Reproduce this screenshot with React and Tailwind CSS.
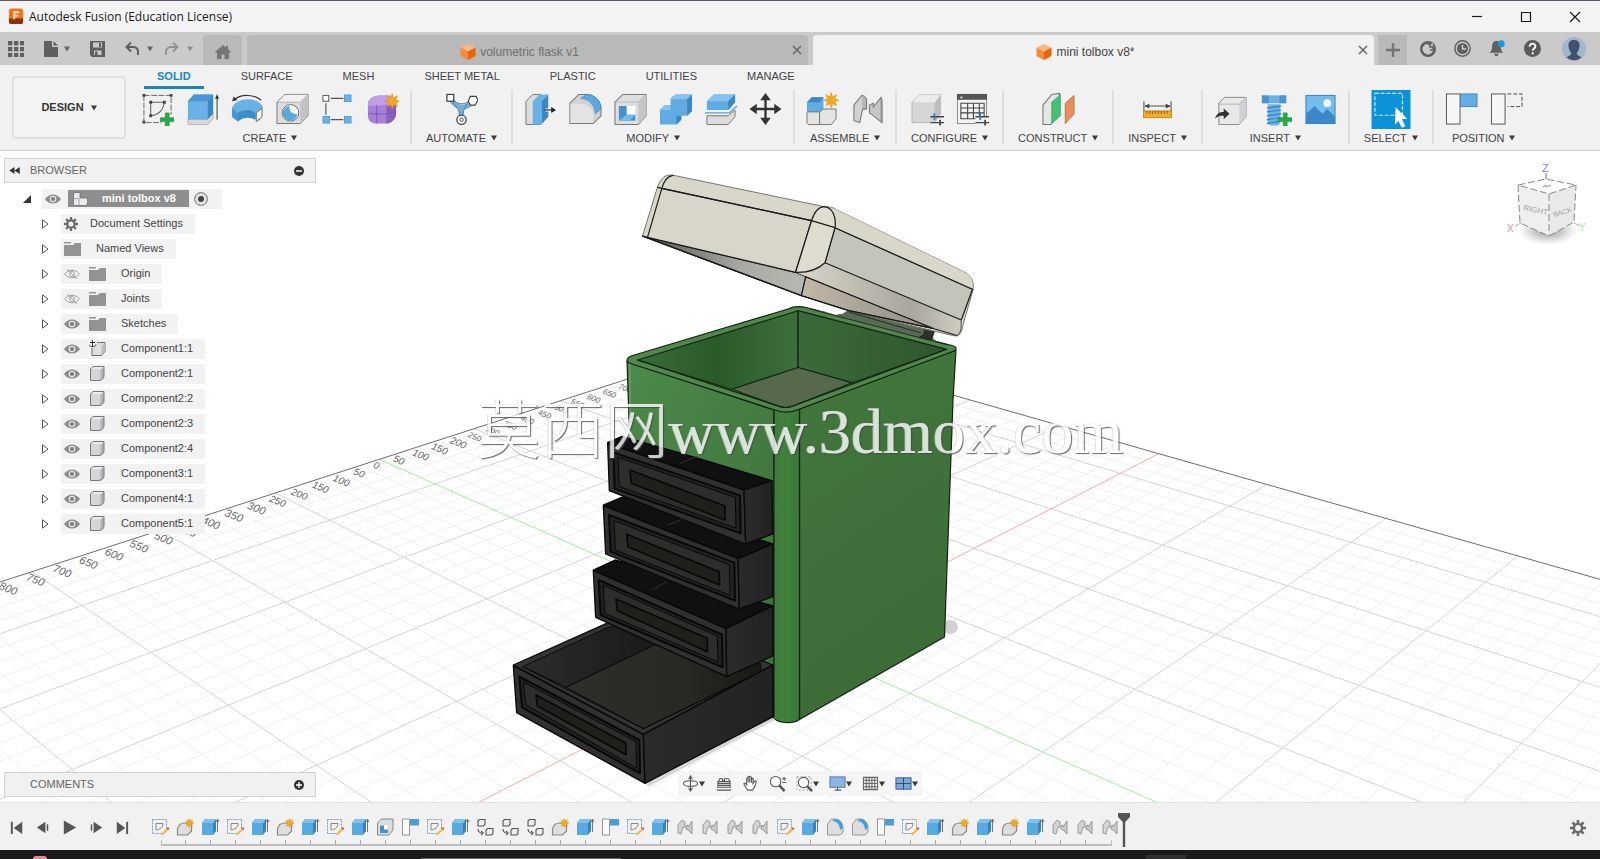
import React from "react";

/* ---------- small shared glyphs ---------- */

const Caret = ({ className = "text-[#3a3a3a]" }) => (
  <svg viewBox="0 0 6 6" className={"h-[6px] w-[6px] shrink-0 " + className} fill="currentColor">
    <path d="M0 0.5h6L3 5.5z" />
  </svg>
);

const Svg = ({ children, box = 34, className = "h-[34px] w-[33px]" }) => (
  <svg viewBox={`0 0 ${box} ${box}`} className={className} fill="none">
    {children}
  </svg>
);

const Star = ({ x, y, r = 7 }) => {
  const pts = [];
  for (let k = 0; k < 16; k++) {
    const a = (k * Math.PI) / 8 - Math.PI / 2;
    const rr = k % 2 ? r * 0.5 : r;
    pts.push(`${(x + rr * Math.cos(a)).toFixed(2)},${(y + rr * Math.sin(a)).toFixed(2)}`);
  }
  return <polygon points={pts.join(" ")} fill="#f0a821" stroke="#d98e12" strokeWidth="0.5" />;
};

const Plus = ({ x, y }) => (
  <path
    d={`M${x - 2} ${y - 7}h4v5h5v4h-5v5h-4v-5h-5v-4h5z`}
    fill="#2aa84a"
    stroke="#1d8a3a"
    strokeWidth="0.6"
  />
);

/* ---------- ribbon icons ---------- */

const ICONS = {
  sketch: (
    <>
      <path d="M3 3h28v20M3 3v28h18" stroke="#666" strokeWidth="1" strokeDasharray="6 1.5" />
      <path d="M10 10h14M10 10v14M24 10c-1 8-5 13-14 14" stroke="#666" strokeWidth="1.1" />
      <g fill="#444">
        <path d="M1.500 1.500h3v3h-3zM29.500 1.500h3v3h-3zM1.500 29h3v3h-3zM8.500 8.500h3v3h-3zM22.500 8.500h3v3h-3zM8.500 22.500h3v3h-3z" />
      </g>
      <Plus x={27} y={28} />
    </>
  ),
  extrude: (
    <>
      <path d="M2 27h20l6-6v6l-6 6H2z" fill="#d8d8d8" stroke="#999" strokeWidth="0.6" />
      <path d="M2 9l6-7h20l-6 7v19H2z" fill="#69b1e6" />
      <path d="M2 9l6-7h20l-6 7z" fill="#4a97d3" />
      <path d="M22 9l6-7v20l-6 6z" fill="#3b87c4" />
      <path d="M32 28V4" stroke="#333" strokeWidth="1" />
      <path d="M32 1.500l2 5h-4z" fill="#333" />
    </>
  ),
  revolve: (
    <>
      <path d="M1 16c2-6 9-9 16-9s13 2 16 8l-3 3v11l-6-2c-4-3-10-3-14 0l-3 3-6-5z" fill="#69b1e6" />
      <path d="M1 16l6 5v9l-6-5z" fill="#4a97d3" />
      <path d="M7 21c5-4 14-4 18 0v7c-5-3-13-3-18 2z" fill="#3f8ccb" />
      <path d="M26 21l6-5v9l-6 5z" fill="#fff" stroke="#666" strokeWidth="1" />
      <path d="M4 7C11 1 24 2 31 8" stroke="#333" strokeWidth="1.100" />
      <path d="M1 9l2-5 3.500 4z" fill="#333" />
    </>
  ),
  hole: (
    <>
      <path d="M1 10l8-8h24v22l-8 8H1z" fill="#dcdcdc" stroke="#777" strokeWidth="1" />
      <path d="M1 10h24l8-8H9z" fill="#f1f1f1" stroke="#888" strokeWidth="0.600" />
      <path d="M25 10l8-8v22l-8 8z" fill="#c2c2c2" />
      <circle cx="15" cy="21" r="8.500" fill="#fff" stroke="#666" />
      <path d="M14 14a7.500 7.500 0 1 0 8 8c-5 1-9-3-8-8z" fill="#5ba7df" />
    </>
  ),
  pattern: (
    <>
      <path d="M10 6h13M5 11v12M10 28h13" stroke="#555" strokeWidth="1.200" />
      <rect x="2" y="3" width="6" height="6" fill="#fff" stroke="#555" />
      <rect x="24" y="2.500" width="7" height="7" fill="#69b1e6" stroke="#3f87c0" strokeWidth="0.600" />
      <rect x="2" y="24.500" width="7" height="7" fill="#69b1e6" stroke="#3f87c0" strokeWidth="0.600" />
      <rect x="24" y="24.500" width="7" height="7" fill="#69b1e6" stroke="#3f87c0" strokeWidth="0.600" />
    </>
  ),
  form: (
    <>
      <path d="M2 12c0-5 5-9 12-9h8c6 0 9 3 9 8v10c0 6-5 11-11 11h-9c-6 0-9-3-9-8z" fill="#a77fd6" />
      <path d="M2 14c0-6 5-11 12-11h8c5 0 8 2 9 6-3 3-6 4-10 4z" fill="#bf9fe6" />
      <path d="M21 13c5 0 9-3 10-5v13c0 6-5 11-10 11z" fill="#8a5dc2" />
      <path d="M11 13v19M2 22h19c4 0 8-2 10-4" stroke="#7a4cb5" strokeWidth="0.800" />
      <Star x={27} y={9} r={8} />
    </>
  ),
  automate: (
    <>
      <path d="M5 5c3 6 7 9 11 10s10-2 13-6M16 14l1 13" stroke="#79aed6" strokeWidth="5" />
      <path d="M7 8c4 7 8 9 9 18M26 9c-5 3-7 8-8 17M8 7c5 6 12 6 18 1" stroke="#4d7da3" strokeWidth="1" />
      <rect x="2" y="2" width="7" height="7" fill="#fff" stroke="#444" strokeWidth="1.300" />
      <path d="M26 4h6l2 4-3 5h-5l-2-4z" fill="#fff" stroke="#444" strokeWidth="1.200" />
      <circle cx="17" cy="28" r="4.800" fill="#fff" stroke="#444" strokeWidth="1.300" />
      <circle cx="17" cy="28" r="1.800" stroke="#444" />
    </>
  ),
  presspull: (
    <>
      <path d="M2 9l7-7h8v31H2z" fill="#dcdcdc" stroke="#777" />
      <path d="M9 9l7-7h9l-7 7v24H9z" fill="#69b1e6" />
      <path d="M18 9l7-7v23l-7 8z" fill="#3b87c4" />
      <path d="M22 18h6" stroke="#fff" strokeWidth="3" />
      <path d="M21 18h8" stroke="#222" strokeWidth="1.200" />
      <path d="M33 18l-5-3v6z" fill="#222" />
    </>
  ),
  fillet: (
    <>
      <path d="M1 11l9-9h8c9 0 15 8 15 15v7l-8 8H1z" fill="#d2d2d2" stroke="#777" strokeWidth="1.100" />
      <path d="M1.500 11.500h10c8 0 13.500 5 13.500 13v7H1.500z" fill="#e4e4e4" />
      <path d="M12 6l6-4c9 0 15 7 15 15l-6 5c0-9-6-15-15-16z" fill="#5ba7df" stroke="#3a82bb" strokeWidth="0.600" />
    </>
  ),
  shell: (
    <>
      <path d="M1 10l8-8h24v22l-8 9H1z" fill="#dedede" stroke="#777" strokeWidth="1.100" />
      <path d="M25 10l8-8v22l-8 9z" fill="#c6c6c6" />
      <path d="M1 10h24l8-8" stroke="#aaa" strokeWidth="0.700" />
      <rect x="5" y="14" width="17" height="15" fill="#fff" />
      <path d="M5 14h8v9h9v6H5z" fill="#4391d0" />
      <path d="M13 23h9l-6 6H5z" fill="#78bbeb" />
    </>
  ),
  combine: (
    <>
      <path d="M12 6l5-4h17v17l-5 5h-6v4l-5 5H1V18l5-5h6z" fill="#5fabe2" />
      <path d="M12 6l5-4h17l-5 5H12zM1 18l5-5h6v5z" fill="#87c3ef" />
      <path d="M29 7l5-5v17l-5 5zM18 24h5v4l-5 5z" fill="#3b87c4" />
    </>
  ),
  split: (
    <>
      <path d="M3 9l7-7h22v8l-7 8H3z" fill="#5fabe2" />
      <path d="M3 9l7-7h22l-7 7z" fill="#86c2ee" />
      <path d="M25 9l7-7v8l-7 8z" fill="#3b87c4" />
      <path d="M1 21h25l8-7" stroke="#5b9fd4" strokeWidth="1.300" />
      <path d="M3 24h22l7-6v7l-7 8H3z" fill="#dcdcdc" stroke="#777" />
    </>
  ),
  move: (
    <>
      <path d="M17 5v24M5 17h24" stroke="#333" strokeWidth="2.400" />
      <path d="M17 0.500l5.500 7.500h-11zM17 33.500l5.500-7.500h-11zM0.500 17l7.500-5.500v11zM33.500 17L26 11.500v11z" fill="#333" />
    </>
  ),
  newcomp: (
    <>
      <path d="M1 10l5-5h12v15H1z" fill="#5fabe2" />
      <path d="M1 10l5-5h12l-4 5z" fill="#3b87c4" />
      <path d="M1 20h13v13H3c-1 0-2-1-2-2z" fill="#e4e4e4" stroke="#777" />
      <path d="M14 20l4-3h13v10l-5 6H14z" fill="#e4e4e4" stroke="#777" />
      <Star x={26} y={8} r={8} />
    </>
  ),
  joint: (
    <>
      <path d="M3 13l8-10 5 4v10h-4l-3 14-6-2z" fill="#d2d2d2" stroke="#777" strokeWidth="1.100" />
      <path d="M11 3c2 0 4 1 5 4v10h-4" fill="#b5b5b5" stroke="#777" />
      <path d="M19 13l4-2v4l8-10 1 3v23l-10-8-3-2z" fill="#c6c6c6" stroke="#777" strokeWidth="1.100" />
      <path d="M31 6v25" stroke="#8b8b8b" />
    </>
  ),
  configure: (
    <>
      <path d="M1 10l8-8h22l-6 8v21H1z" fill="#d6d6d6" stroke="#aaa" strokeWidth="0.800" />
      <path d="M1 10l8-8h22l-6 8z" fill="#ececec" />
      <path d="M25 10l6-8v20l-6 9z" fill="#bdbdbd" />
      <path d="M20 25h14M20 31h14" stroke="#444" strokeWidth="1.400" />
      <path d="M24 21.500v7" stroke="#3a77b5" strokeWidth="1.800" />
      <path d="M30 28v6" stroke="#444" strokeWidth="1.800" />
    </>
  ),
  table: (
    <>
      <rect x="1.500" y="2" width="30" height="30" fill="#f3f3f3" stroke="#888" />
      <rect x="1" y="1.500" width="31" height="6" fill="#555" />
      <path d="M4 4.500h3l-1.500 2z" fill="#fff" />
      <path d="M5 11h24v16H5zM5 16h24M5 21h24M12 11v16M18 11v16M24 11v16" stroke="#444" strokeWidth="1.100" />
      <path d="M20 25h14v9H20z" fill="#f1f1f1" />
      <path d="M20 25h14M20 31h14" stroke="#444" strokeWidth="1.400" />
      <path d="M25 21.500v7" stroke="#3a77b5" strokeWidth="1.800" />
      <path d="M30 28v6" stroke="#444" strokeWidth="1.800" />
    </>
  ),
  plane: (
    <>
      <path d="M1 13L10 2l8-1v22l-9 10H1z" fill="#e6e6e6" stroke="#777" strokeWidth="1.100" />
      <path d="M10 10l9-8v22l-9 8z" fill="#43bf77" stroke="#2f9b5c" strokeWidth="0.600" />
      <path d="M24 11l9-8v19l-9 10z" fill="#e98f5d" stroke="#b96c40" strokeWidth="0.900" />
    </>
  ),
  measure: (
    <>
      <path d="M3 9v10M31 9v10M4 14h26" stroke="#555" strokeWidth="1.100" />
      <path d="M3.500 14l5-2.500v5zM30.500 14l-5-2.500v5z" fill="#444" />
      <rect x="2.500" y="19" width="29" height="7" fill="#f0ac2b" stroke="#bb7d11" strokeWidth="0.800" />
      <path d="M6 19v3M9 19v3M12 19v3M15 19v3M18 19v3M21 19v3M24 19v3M27 19v3" stroke="#7c5410" strokeWidth="0.900" />
    </>
  ),
  insert: (
    <>
      <path d="M5 11l6-6h22v20l-7 8H5z" fill="#e8e8ea" stroke="#888" />
      <path d="M26 12l7-7v20l-7 8z" fill="#d0d0d3" />
      <path d="M5 12h21l7-7" stroke="#999" strokeWidth="0.700" />
      <path d="M1 27c2-6 5-7 9-7v-3.500l6 5.500-6 5.500V24c-3 0-6 0-9 3z" fill="#333" />
    </>
  ),
  bolt: (
    <>
      <path d="M3 3h25v8H3z" fill="#69b1e6" />
      <path d="M3 3h7v8H3zM21 3h7v8h-7z" fill="#4a94cf" />
      <path d="M9 12h13v20l-3 2h-7l-3-2z" fill="#69b1e6" />
      <path d="M8 16l15-2M8 20l15-2M8 24l15-2M8 28l15-2M8 32l12-2" stroke="#3b80b8" strokeWidth="1.200" />
      <Plus x={27} y={28} />
    </>
  ),
  image: (
    <>
      <rect x="2" y="3" width="30" height="29" fill="#74bbf0" stroke="#3e7fb3" />
      <path d="M2 22l9-8 8 8 5-5 8 8v7H2z" fill="#3a88c8" />
      <circle cx="24" cy="11" r="4" fill="#eef7fd" />
    </>
  ),
  select: (
    <>
      <path d="M0 0h34v34H0z" fill="#0b92d8" />
      <path d="M3 3h24v19H3z" stroke="#c8ecfb" strokeWidth="1" strokeDasharray="3.500 1.500" />
      <path d="M21 15l10 10-4.500.500 3 6-3 1.500-3-6-3 3z" fill="#fff" />
    </>
  ),
  capture: (
    <>
      <rect x="1.500" y="1.500" width="14" height="31" fill="#f6f6f6" stroke="#555" />
      <rect x="16" y="1.500" width="17" height="13" fill="#64aee8" stroke="#4b84b5" />
    </>
  ),
  revert: (
    <>
      <path d="M18 1.500h15v13H18" stroke="#444" strokeDasharray="4 2" />
      <rect x="1.500" y="1.500" width="14" height="31" fill="#f6f6f6" stroke="#555" />
    </>
  ),
};

const GROUPS = [
  { label: "CREATE", icons: ["sketch", "extrude", "revolve", "hole", "pattern", "form"] },
  { label: "AUTOMATE", icons: ["automate"] },
  { label: "MODIFY", icons: ["presspull", "fillet", "shell", "combine", "split", "move"] },
  { label: "ASSEMBLE", icons: ["newcomp", "joint"] },
  { label: "CONFIGURE", icons: ["configure", "table"] },
  { label: "CONSTRUCT", icons: ["plane"] },
  { label: "INSPECT", icons: ["measure"] },
  { label: "INSERT", icons: ["insert", "bolt", "image"] },
  { label: "SELECT", icons: ["select"] },
  { label: "POSITION", icons: ["capture", "revert"] },
];

const TABS = ["SOLID", "SURFACE", "MESH", "SHEET METAL", "PLASTIC", "UTILITIES", "MANAGE"];

/* ---------- title bar ---------- */

function TitleBar() {
  return (
    <header className="flex h-8 shrink-0 items-center border-t border-[#5d5568] bg-[#f3f3f3] pl-2">
      <svg viewBox="0 0 16 18" className="h-[17px] w-4">
        <rect x="0.500" y="0.500" width="15" height="16.500" rx="3" fill="#f0731c" />
        <path d="M0.500 11h15v3a3 3 0 0 1-3 3h-9a3 3 0 0 1-3-3z" fill="#8a3206" />
        <path d="M5 3.500h6.500v2H7.200v1.800h3.500v1.900H7.200V12H5z" fill="#ffd9b8" />
      </svg>
      <h1 className="ml-[5px] flex-1 font-['Open_Sans','Noto_Sans',sans-serif] text-[12px] text-[#1a1a1a]">
        Autodesk Fusion (Education License)
      </h1>
      <div className="flex items-center gap-[17px] pr-[9px]">
        {[
          ["Minimize", "M11 15.500h10"],
          ["Maximize", "M11.500 11.500h9v9h-9z"],
          ["Close", "M11 11l10 10M21 11L11 21"],
        ].map(([name, d]) => (
          <button key={name} aria-label={name} className="h-8 w-8">
            <svg viewBox="0 0 32 32" className="h-8 w-8" fill="none" stroke="#1a1a1a" strokeWidth="1.200">
              <path d={d} />
            </svg>
          </button>
        ))}
      </div>
    </header>
  );
}

/* ---------- document tab strip ---------- */

const DocCube = () => (
  <svg viewBox="0 0 16 16" className="h-4 w-4">
    <path d="M8 0l7.500 3.500L8 7.500.5 3.500z" fill="#fbb684" />
    <path d="M.5 3.500L8 7.500V16L.5 12z" fill="#f68a3c" />
    <path d="M15.500 3.500L8 7.500V16l7.500-4z" fill="#e8650d" />
  </svg>
);

const CloseX = () => (
  <svg viewBox="0 0 10 10" className="h-[10px] w-[10px]" stroke="#666" strokeWidth="1.500">
    <path d="M1 1l8 8M9 1L1 9" />
  </svg>
);

function DocBar() {
  return (
    <div className="flex h-[33px] shrink-0 items-end bg-[#cacaca] text-[#666]">
      <div className="flex h-full w-[203px] items-center pl-2">
        <button aria-label="Data panel" className="w-[17px]">
          <svg viewBox="0 0 16 16" className="h-4 w-4" fill="#5f5f5f">
            {[0, 6, 12].map((y) => [0, 6, 12].map((x) => <rect key={`${x}-${y}`} x={x} y={y} width="4.300" height="4.300" />))}
          </svg>
        </button>
        <button aria-label="File" className="ml-[19px] flex items-center gap-[6px]">
          <svg viewBox="0 0 14 16" className="h-4 w-[14px]" fill="#5f5f5f">
            <path d="M0 0h8v6h6v10H0zM9.500 0L14 4.500H9.500z" />
          </svg>
          <Caret className="text-[#666]" />
        </button>
        <button aria-label="Save" className="ml-5">
          <svg viewBox="0 0 15 16" className="h-4 w-[15px]" fill="#5f5f5f">
            <path fillRule="evenodd" d="M0 0h15v16H2l-2-2zM3 1.500v5h9v-5zM4 9.500V14h7.500V9.500z" />
            <path d="M9 2h2v4H9zM5 10.500h2.500V14H5z" />
          </svg>
        </button>
        <button aria-label="Undo" className="ml-5 flex items-center gap-2 text-[#5f5f5f]">
          <svg viewBox="0 0 14 14" className="h-[14px] w-[14px]" fill="none" stroke="currentColor" strokeWidth="2">
            <path d="M2 5h6c3 0 5 2 5 5v3" />
            <path d="M6 .5L1.500 5 6 9.500" />
          </svg>
          <Caret className="text-[#666]" />
        </button>
        <button aria-label="Redo" className="ml-3 flex items-center gap-2 text-[#8f8f8f]">
          <svg viewBox="0 0 14 14" className="h-[14px] w-[14px]" fill="none" stroke="currentColor" strokeWidth="1.800">
            <path d="M12 5H6c-3 0-5 2-5 5v3" />
            <path d="M8 .5L12.500 5 8 9.500" />
          </svg>
          <Caret className="text-[#8f8f8f]" />
        </button>
      </div>
      <button aria-label="Home" className="mr-[5px] flex h-[30px] w-[39px] items-center justify-center rounded-t-sm bg-[#b9b9b9]">
        <svg viewBox="0 0 16 14" className="mt-[3px] h-[14px] w-4" fill="#757575">
          <path d="M8 0l3 2.500V1h2v3l3 3-1 1-1-.7V14H9.500V9.500h-3V14H2V7.300L1 8 0 7z" />
        </svg>
      </button>
      <div className="mr-[5px] flex h-[30px] flex-1 items-center rounded-t-sm bg-[#b9b9b9] pr-[6px] text-[12px] text-[#707070]">
        <a href="#flask" className="flex flex-1 items-center justify-center gap-1 pt-[3px]">
          <DocCube />
          volumetric flask v1
        </a>
        <button aria-label="Close volumetric flask">
          <CloseX />
        </button>
      </div>
      <div className="mr-1 flex h-[30px] flex-1 items-center rounded-t-sm bg-[#f1f1f1] pr-[6px] text-[12px] text-[#444]">
        <a href="#toolbox" className="flex flex-1 items-center justify-center gap-1 pt-[3px]">
          <DocCube />
          mini tolbox v8*
        </a>
        <button aria-label="Close mini tolbox">
          <CloseX />
        </button>
      </div>
      <button aria-label="New design" className="flex h-[30px] w-[29px] items-center justify-center bg-[#b9b9b9]">
        <svg viewBox="0 0 14 14" className="h-[14px] w-[14px]" fill="#757575">
          <path d="M5.800 0h2.400v5.800H14v2.400H8.200V14H5.800V8.200H0V5.800h5.800z" />
        </svg>
      </button>
      <div className="flex h-full w-[193px] items-center pl-[13px]">
        <div className="flex flex-1 items-center gap-[18px]">
          <button aria-label="Extensions">
            <svg viewBox="0 0 16 16" className="h-4 w-4">
              <circle cx="8" cy="8" r="6.700" fill="none" stroke="#5f5f5f" strokeWidth="2.600" />
              <path d="M1 9l5-2 3 3V4l4-2 1 6-6 1z" fill="#cacaca" opacity="0.800" />
              <path d="M7 3h3v3h3v3h-3" stroke="#5f5f5f" strokeWidth="1.600" fill="none" />
            </svg>
          </button>
          <button aria-label="Job status">
            <svg viewBox="0 0 16 16" className="h-[17px] w-[17px]" fill="none" stroke="#5f5f5f">
              <circle cx="8" cy="8" r="7.200" strokeWidth="1.400" />
              <circle cx="8" cy="8" r="5.200" fill="#5f5f5f" strokeWidth="0" />
              <path d="M8 4.500V8.500h3.500" stroke="#d0d0d0" strokeWidth="1.400" />
            </svg>
          </button>
          <button aria-label="Notifications">
            <svg viewBox="0 0 16 16" className="h-[17px] w-[17px]">
              <path d="M7 1c-3 0-4 2.500-4 5 0 3-1 4.500-2.500 6h13C12 10.500 11 9 11 6c0-2.500-1-5-4-5zM5 13h4c0 3-4 3-4 0z" fill="#5f5f5f" />
              <circle cx="11.500" cy="3.500" r="3.300" fill="#1d97dd" />
            </svg>
          </button>
          <button aria-label="Help">
            <svg viewBox="0 0 16 16" className="h-[17px] w-[17px]">
              <circle cx="8" cy="8" r="8" fill="#5a5a5a" />
              <path d="M5.300 6.200c0-3.800 5.600-3.600 5.400 0-.1 1.700-2.400 1.800-2.500 3.800M8.200 11.500v1.800" stroke="#fff" strokeWidth="1.800" fill="none" />
            </svg>
          </button>
        </div>
        <button aria-label="Account" className="mr-[14px]">
          <svg viewBox="0 0 24 24" className="h-6 w-6">
            <circle cx="12" cy="12" r="12" fill="#a3b6cc" />
            <path d="M12 3c4 0 6 2.500 5.500 6.500-.3 3-1.500 5-2.500 6v2l4.500 3A12 12 0 0 1 4.500 20.500L9 17.500v-2c-1-1-2.200-3-2.500-6C6 5.500 8 3 12 3z" fill="#41506b" />
          </svg>
        </button>
      </div>
    </div>
  );
}

/* ---------- ribbon ---------- */

function Ribbon() {
  return (
    <div className="flex shrink-0 border-b border-[#cfcfcf] bg-[#f1f1f1] text-[11px] text-[#444]">
      <button className="mb-[11px] ml-3 mr-1 mt-[11px] flex w-[114px] items-center justify-center gap-[7px] rounded-[4px] border-2 border-[#e0e0e0] bg-[#f3f3f3] font-bold text-[#333]">
        DESIGN <Caret />
      </button>
      <div className="flex flex-1 flex-col">
        <nav className="ml-[14px] flex h-6 gap-6">
          {TABS.map((t) => (
            <a
              key={t}
              href={"#" + t.toLowerCase().replace(" ", "-")}
              className={
                t === "SOLID"
                  ? "flex items-center border-b-[3px] border-[#1588c4] px-[13px] pt-px font-bold text-[#1588c4]"
                  : "flex items-center border-b-[3px] border-transparent px-[13px] pt-px"
              }
            >
              {t}
            </a>
          ))}
        </nav>
        <div className="flex pb-[6px] pt-px">
          {GROUPS.map((g, k) => (
            <section
              key={g.label}
              className={
                k === GROUPS.length - 1
                  ? "flex flex-col items-center px-[11px]"
                  : "flex flex-col items-center border-r-2 border-[#dedede] px-[11px]"
              }
            >
              <div className="flex h-[38px] items-center gap-3">
                {g.icons.map((n) => (
                  <button key={n} aria-label={n}>
                    <Svg className={n === "select" ? "h-[39px] w-10" : "h-[34px] w-[33px]"}>{ICONS[n]}</Svg>
                  </button>
                ))}
              </div>
              <button className="flex h-4 items-center gap-[5px] px-[3px] pt-1">
                {g.label} <Caret />
              </button>
            </section>
          ))}
        </div>
      </div>
    </div>
  );
}

/* ---------- ground grid, projected from two vanishing points ---------- */

const VB = [-1077, -183];
const VA = [2461, -214];
const U = -0.0628;
const W = -0.065;
const M0 = -5.8;
const N0 = -4.6;

function project(m, n) {
  const d = 1 + m * U + n * W;
  return [(909.8 + m * U * VB[0] + n * W * VA[0]) / d, (693.3 + m * U * VB[1] + n * W * VA[1]) / d];
}

function gridLines() {
  const out = [];
  const add = (a, b, kind, key) => out.push({ a, b, kind, key });
  for (let k = 0; k <= 85; k++) {
    const m = M0 + k * 0.2;
    const step = Math.round(m * 5);
    const far = (0.12 - 1 - m * U) / W;
    if (far <= N0) break;
    const kind = k === 0 ? "edge" : step === -5 ? "red" : step % 5 === 0 ? "major" : "minor";
    add(project(m, N0), project(m, far), kind, "m" + k);
  }
  for (let k = 0; k <= 85; k++) {
    const n = N0 + k * 0.2;
    const step = Math.round(n * 5);
    const far = (0.12 - 1 - n * W) / U;
    if (far <= M0) break;
    const kind = k === 0 ? "edge" : step === 0 ? "green" : step % 5 === 0 ? "major" : "minor";
    add(project(M0, n), project(far, n), kind, "n" + k);
  }
  const order = ["minor", "major", "green", "red", "edge"];
  return out.sort((p, q) => order.indexOf(p.kind) - order.indexOf(q.kind));
}

const STROKE = { minor: "#f0f0f0", major: "#d4d4d4", green: "#a4eba4", red: "#eeacae", edge: "#6e6e6e" };

function Grid() {
  const labels = [];
  for (let v = -1100; v <= 800; v += 50) {
    const [x, y] = project(M0, v / 250);
    labels.push({ v, x, y, s: v > 250 ? 11 : v > -250 ? 10 : 8 });
  }
  return (
    <g>
      {gridLines().map((l) => (
        <line key={l.key} x1={l.a[0]} y1={l.a[1]} x2={l.b[0]} y2={l.b[1]} stroke={STROKE[l.kind]} strokeWidth="1" />
      ))}
      <g fill="#666" fontFamily="Liberation Sans, Arial, sans-serif" fontStyle="italic">
        {labels.map((l) => (
          <text key={l.v} x={l.x - 3} y={l.y + 10} fontSize={l.s} transform={`rotate(22 ${l.x} ${l.y})`}>
            {Math.abs(l.v)}
          </text>
        ))}
      </g>
    </g>
  );
}

/* ---------- toolbox model ---------- */

const DRAWERS = [
  {
    top: "100,795 385,668 500,640 878,795 490,1003",
    front: "100,797 490,1003 495,1150 110,938",
    side: "490,1003 878,795 880,950 495,1150",
    inset: "118,830 478,1020 480,1120 126,922",
    panel: "130,846 468,1025 470,1104 138,915",
    slot: "168,885 438,1030 438,1064 172,918",
    open: true,
  },
  {
    top: "340,510 405,480 560,520 878,618 738,686",
    front: "340,512 738,686 740,830 347,652",
    side: "738,686 878,618 878,768 740,830",
    inset: "356,540 726,704 728,802 362,645",
    panel: "370,556 712,708 714,786 374,640",
    slot: "408,597 682,715 682,755 412,632",
    ridge: "515,570 560,546",
  },
  {
    top: "370,315 430,290 590,335 878,432 774,476",
    front: "370,317 774,476 778,627 377,462",
    side: "774,476 878,432 878,590 778,627",
    inset: "387,345 763,488 765,602 392,455",
    panel: "402,362 748,494 750,586 406,450",
    slot: "440,403 718,515 718,555 444,440",
    ridge: "562,376 606,358",
  },
  {
    top: "383,128 426,109 620,165 876,242 792,270",
    front: "383,130 792,270 797,432 388,272",
    side: "792,270 876,242 878,402 797,432",
    inset: "400,157 780,286 782,400 404,266",
    panel: "414,172 766,292 768,384 418,260",
    slot: "450,210 735,318 735,360 454,250",
    ridge: "600,190 650,170",
  },
];

function Drawers() {
  return (
    <g transform="translate(480 400) scale(0.33333)" stroke="#080808" strokeWidth="4" strokeLinejoin="round">
      <polygon points="498,1152 885,950 887,958 505,1160" fill="#999" stroke="none" opacity="0.4" />
      {DRAWERS.map((d) => (
        <g key={d.front}>
          <polygon points={d.top} fill={d.open ? "#343434" : "#101010"} />
          {d.open && (
            <>
              <polygon points="128,800 385,682 620,660 600,700 258,862" fill="url(#drawerWall)" strokeWidth="3" />
              <polygon points="258,862 600,698 842,790 842,816 490,986" fill="url(#drawerFloor)" strokeWidth="3" />
              <path d="M128 800L490 986L846 814" fill="none" strokeWidth="3" />
            </>
          )}
          {d.ridge && <polyline points={d.ridge} stroke="#333" strokeWidth="3" fill="none" />}
          <polygon points={d.front} fill="#303030" />
          <polygon points={d.side} fill="url(#drawerSide)" />
          <polygon points={d.inset} fill="#222222" strokeWidth="6" />
          <polygon points={d.panel} fill="#2d2d2c" strokeWidth="3" />
          <polygon points={d.slot} fill="#1f1f1c" strokeWidth="5" />
        </g>
      ))}
    </g>
  );
}

function BoxBody() {
  return (
    <g stroke="#10240f" strokeWidth="1.2" strokeLinejoin="round">
      <ellipse cx="950" cy="627" rx="8" ry="7" fill="#d2d0d2" stroke="none" />
      <path d="M627 361l147 49v308l-137-70z" fill="url(#leftFace)" />
      <path d="M799.500 409L956 350l-3 50-8.500 237-145 82.500z" fill="url(#rightFace)" />
      <path d="M774 409v309c3 5 18 6.500 25.500 1.500V409z" fill="url(#column)" />
      <path d="M630 363v76" stroke="#6c9a69" strokeWidth="1.500" />
      <path
        d="M627 361c0-3 1-4 4-5l157-47c6-3 14-3 22-.500l142 37c5 1 5 4 2 5.500L799.700 409c-9 4-18 4-27 .300L629 363z"
        fill="#53864f"
      />
      <path d="M637.500 360L798 310.700V368l-66 21.500z" fill="url(#innerLeft)" />
      <path d="M798 310.700l148.700 38.600L852 383l-54-15.500z" fill="url(#innerRight)" />
      <path d="M798 367.500l54 15.200-59 23.300c-5 2-10 2-15 0l-46-16.700z" fill="#56694c" />
      <path d="M637.500 360L778 406c5 2 10 2 15 0l153.700-56.700" fill="none" />
      <path d="M812 310l30 4 8-5 70 16 12 12 6 6z" fill="#5a6a58" stroke="none" />
      <path d="M826 312l10 3 9-3 3-6-18-4z" fill="#fff" stroke="none" />
      <path d="M810 309l138 36" fill="none" strokeWidth="0.800" />
      <path d="M849 312l72 21" fill="none" strokeWidth="0.800" />
    </g>
  );
}

function Lid() {
  return (
    <g stroke="#1b1b1b" strokeWidth="1.200" strokeLinejoin="round" strokeLinecap="round">
      <path d="M925 328l10 2-3.500 10-7-2-5-1 4-2z" fill="#2d322d" strokeWidth="0.800" />
      <path
        d="M642.500 236l15-49c3-9 8-13 16-11.700l151 31.400c6 0 9 1 12 3l127 62c7 3 11 9 9.500 18l-10.500 37c-1 7-4 10-9 9l-17-4-88-21-47-15z"
        fill="#d9d7ca"
        stroke="#77766e"
        strokeWidth="1"
      />
      <path d="M642.500 236l5 1.300 148 35 10.300 4.400-4.400 19z" fill="url(#underLid)" />
      <path d="M805.800 276.700L933 328.300l-84.300-17.600-47.300-15z" fill="url(#tan)" />
      <path d="M795.600 272.300c12 0 22-3 29.400-9.600L961.300 320c1 9-1 14-6 15.500l-22-7-127-52z" fill="url(#rim)" stroke="none" />
      <path d="M835 227.700l137.500 61.600-11.200 30.700L825 262.700z" fill="#c3c4ba" />
      <path d="M836 211c1 6 0 12-1 16.700L972 289.300c2-9-1-14-8.500-17.500L833 208z" fill="#d9d7ca" stroke="none" />
      <path d="M661.800 188.300l149.700 32.400-16 51.600-148-35z" fill="#d8d6ca" />
      <path d="M811.500 220.700c3-9 7-14 13-14 8 1 12 10 10.500 21l-10 35c-7 6.500-18 10-29.400 9.600z" fill="#dfddcf" />
      <path d="M657.700 187.300l4.100 1 149.700 32.400 23.500 7 137.500 61.600M661.800 188.300c2-7 5-12 11.200-13M805.800 276.700L933 328.300M957 335.500l-24-7-84-18-47.600-15L642.500 236" fill="none" />
      <path d="M957 335.700c5-3 4-9 4.300-15.700" fill="none" stroke="#666" />
    </g>
  );
}

function Scene() {
  return (
    <svg
      viewBox="0 151 1600 651"
      preserveAspectRatio="xMidYMid slice"
      className="absolute inset-0 h-full w-full"
      role="img"
      aria-label="Toolbox model on the ground grid"
    >
      <defs>
        <linearGradient id="leftFace" x1="0" y1="0" x2="1" y2="1">
          <stop offset="0" stopColor="#4d8a4b" />
          <stop offset="1" stopColor="#3c6e39" />
        </linearGradient>
        <linearGradient id="rightFace" x1="0" y1="0" x2="0.300" y2="1">
          <stop offset="0" stopColor="#43773f" />
          <stop offset="1" stopColor="#3d6b38" />
        </linearGradient>
        <linearGradient id="column">
          <stop offset="0" stopColor="#427b40" />
          <stop offset="0.600" stopColor="#3f813a" />
          <stop offset="1" stopColor="#3e7539" />
        </linearGradient>
        <linearGradient id="innerLeft">
          <stop offset="0" stopColor="#3c6b3a" />
          <stop offset="0.500" stopColor="#2b5a2a" />
          <stop offset="1" stopColor="#3d6f3c" />
        </linearGradient>
        <linearGradient id="innerRight">
          <stop offset="0" stopColor="#3b6a3a" />
          <stop offset="1" stopColor="#2f562f" />
        </linearGradient>
        <linearGradient id="underLid">
          <stop offset="0" stopColor="#55554f" />
          <stop offset="0.600" stopColor="#a9a9a4" />
          <stop offset="1" stopColor="#b9b9b4" />
        </linearGradient>
        <linearGradient id="tan">
          <stop offset="0" stopColor="#c2b8a8" />
          <stop offset="1" stopColor="#8f8d86" />
        </linearGradient>
        <linearGradient id="rim">
          <stop offset="0" stopColor="#d9d7ca" />
          <stop offset="0.700" stopColor="#a8a69d" />
          <stop offset="1" stopColor="#d0cec3" />
        </linearGradient>
        <linearGradient id="drawerSide">
          <stop offset="0" stopColor="#2b2b2b" />
          <stop offset="1" stopColor="#222222" />
        </linearGradient>
        <linearGradient id="drawerWall">
          <stop offset="0" stopColor="#2c2c2c" />
          <stop offset="1" stopColor="#151515" />
        </linearGradient>
        <linearGradient id="drawerFloor">
          <stop offset="0" stopColor="#2f2e2a" />
          <stop offset="0.600" stopColor="#292824" />
          <stop offset="1" stopColor="#181815" />
        </linearGradient>
      </defs>
      <Grid />
      <BoxBody />
      <Drawers />
      <Lid />
    </svg>
  );
}

/* ---------- browser tree ---------- */

const Eye = ({ off }) => (
  <svg viewBox="0 0 16 12" className="h-3 w-4" fill="none">
    {off ? (
      <>
        <path d="M.7 6C4 1 12 1 15.300 6 12 11 4 11 .7 6z" stroke="#a0a0a0" />
        <circle cx="8" cy="6" r="2.500" stroke="#a0a0a0" />
        <path d="M3 1l10 10" stroke="#a0a0a0" />
      </>
    ) : (
      <>
        <path d="M0 6C4 0 12 0 16 6 12 12 4 12 0 6z" fill="#8d8d8d" />
        <circle cx="8" cy="6" r="3.300" fill="#e4e4e4" />
        <circle cx="8" cy="6" r="2" fill="#7d7d7d" />
      </>
    )}
  </svg>
);

const Folder = () => (
  <svg viewBox="0 0 17 14" className="h-[14px] w-[17px]">
    <path d="M0 0h7v1.500H0zM0 3h9l2-2h6v13H0z" fill="#939393" />
  </svg>
);

const GearIcon = ({ className }) => (
  <svg viewBox="0 0 16 16" className={className}>
    <g stroke="#6a6a6a" strokeWidth="2.600">
      <path d="M8 0v16M0 8h16M2.400 2.400l11.200 11.200M13.600 2.400L2.400 13.600" />
    </g>
    <circle cx="8" cy="8" r="5.300" fill="#6a6a6a" />
    <circle cx="8" cy="8" r="2.900" fill="#f1f1f1" />
  </svg>
);

const Body = ({ anchor }) =>
  anchor ? (
    <svg viewBox="0 0 17 17" className="h-[17px] w-[17px]">
      <path d="M3 8V15.500h9.500l3.500-4V2.500H8" fill="#e0e0e2" stroke="#6c6c6c" />
      <path d="M12.500 6L16 2.500v9l-3.500 4z" fill="#bcbcbf" />
      <path d="M3.500 0v7M1 2.500h5M0 4.500c1 3 6 3 7 0" stroke="#333" fill="none" />
    </svg>
  ) : (
    <svg viewBox="0 0 17 17" className="h-[17px] w-[17px]">
      <path d="M1.500 4l2.500-2.500h11v9.500c0 2-2.500 4.500-4.500 4.500h-9z" fill="#b2b2b6" stroke="#77777a" strokeWidth="1" />
      <path d="M2 4.500h9.500v8c0 1.500-1 2.500-2.500 2.500H2z" fill="#d6d6d9" />
      <path d="M2 4.500L4.300 2H14.500L11.500 4.500z" fill="#ececee" />
    </svg>
  );

const ROWS = [
  { label: "Document Settings", kind: "gear" },
  { label: "Named Views", kind: "folder" },
  { label: "Origin", kind: "folder", eye: "off" },
  { label: "Joints", kind: "folder", eye: "off" },
  { label: "Sketches", kind: "folder", eye: "on" },
  { label: "Component1:1", kind: "anchor", eye: "on" },
  { label: "Component2:1", kind: "body", eye: "on" },
  { label: "Component2:2", kind: "body", eye: "on" },
  { label: "Component2:3", kind: "body", eye: "on" },
  { label: "Component2:4", kind: "body", eye: "on" },
  { label: "Component3:1", kind: "body", eye: "on" },
  { label: "Component4:1", kind: "body", eye: "on" },
  { label: "Component5:1", kind: "body", eye: "on" },
];

const RowIcon = ({ kind }) => {
  if (kind === "gear") return <GearIcon className="h-[14px] w-[14px]" />;
  if (kind === "folder") return <Folder />;
  return <Body anchor={kind === "anchor"} />;
};

function Browser() {
  return (
    <aside className="absolute left-1 top-[7px] w-[312px] text-[11px] text-[#444]">
      <div className="flex h-[25px] items-center border border-[#d2d2d2] bg-[#f1f1f1] pl-1 pr-[11px]">
        <button aria-label="Collapse browser">
          <svg viewBox="0 0 12 8" className="h-[7px] w-[11px]" fill="#333">
            <path d="M6 0v8L0 4zM12 0v8L6 4z" />
          </svg>
        </button>
        <h2 className="ml-[10px] flex-1 text-[#666]">BROWSER</h2>
        <button aria-label="Hide browser">
          <svg viewBox="0 0 10 10" className="h-[10px] w-[10px]">
            <circle cx="5" cy="5" r="5" fill="#333" />
            <path d="M2 5h6" stroke="#fff" strokeWidth="1.500" />
          </svg>
        </button>
      </div>
      <ul>
        <li className="mt-[3px] flex h-[25px] items-center pl-[19px]">
          <button aria-label="Collapse root" className="mr-[11px]">
            <svg viewBox="0 0 9 9" className="h-2 w-2" fill="#333">
              <path d="M9 0v9H0z" />
            </svg>
          </button>
          <div className="flex h-5 items-center bg-[#f2f2f2] pl-[3px] pr-[14px]">
            <Eye />
            <span className="ml-[7px] flex h-[17px] items-center bg-[#8e8e8e] pl-[5px] pr-[13px] font-bold text-white">
              <svg viewBox="0 0 15 14" className="mr-[14px] h-[14px] w-[15px]">
                <path d="M.5 2L2 .5h5V6H14.500v5.500L12.500 13.500H.5z" fill="#e9e9ee" stroke="#666" strokeWidth="0.700" />
                <path d="M6 13.500V6.500M.5 6.500H6" stroke="#888" strokeWidth="0.700" />
              </svg>
              mini tolbox v8
            </span>
            <input
              type="radio"
              name="active"
              defaultChecked
              aria-label="Activate mini tolbox v8"
              className="ml-[5px] h-[14px] w-[14px] appearance-none rounded-full border border-[#999] bg-[#444] shadow-[inset_0_0_0_3px_#e4e4ec]"
            />
          </div>
        </li>
        {ROWS.map((r) => (
          <li key={r.label} className="flex h-[25px] items-center pl-[37px]">
            <button aria-label={"Expand " + r.label} className="mr-[12px]">
              <svg viewBox="0 0 8 10" className="h-[10px] w-2" fill="#fff" stroke="#555">
                <path d="M1.500 .8L7 5 1.500 9.200z" />
              </svg>
            </button>
            <div className="flex h-5 items-center bg-[#f2f2f2] pl-[3px] pr-3">
              {r.eye && (
                <span className="mr-[9px]">
                  <Eye off={r.eye === "off"} />
                </span>
              )}
              <RowIcon kind={r.kind} />
              <span className={r.kind === "gear" ? "ml-3" : "ml-[15px]"}>{r.label}</span>
            </div>
          </li>
        ))}
      </ul>
    </aside>
  );
}

/* ---------- view cube and navigation bar ---------- */

function ViewCube() {
  return (
    <svg viewBox="0 0 100 96" className="absolute right-0 top-[6px] h-24 w-[100px]" role="img" aria-label="View cube">
      <defs>
        <radialGradient id="cubeShadow">
          <stop offset="0" stopColor="#777" stopOpacity="0.800" />
          <stop offset="1" stopColor="#999" stopOpacity="0" />
        </radialGradient>
      </defs>
      <ellipse cx="48" cy="74" rx="30" ry="14" fill="url(#cubeShadow)" />
      <path d="M18 28l28-6 30 6-27 9z" fill="#fcfcfc" />
      <path d="M18 28l31 9v42L20 66z" fill="#efefef" />
      <path d="M76 28l-27 9v42l25-14z" fill="#e9e9e9" />
      <path d="M18 28l28-6 30 6-27 9zM18 28l2 38 29 13 25-14 2-37M49 37v42" fill="none" stroke="#888" strokeDasharray="7 3" />
      <path d="M46 22v-6" stroke="#8a86c9" strokeWidth="1.300" />
      <path d="M15 69l6-3M74 66l6 3" stroke="#aaa" />
      <path d="M43 30l3-2v2l5-2" stroke="#999" fill="none" />
      <g fontFamily="Liberation Sans, Arial, sans-serif" fill="#a2a2a2">
        <text x="23" y="53" fontSize="8" transform="rotate(12 23 53)">RIGHT</text>
        <text x="54" y="60" fontSize="7" transform="rotate(-16 54 60)">BACK</text>
        <text x="42" y="15" fontSize="11" fill="#8a86c9">Z</text>
        <text x="7" y="75" fontSize="10" fill="#e58d8d">X</text>
        <text x="79" y="74" fontSize="10" fill="#a9e3a9">Y</text>
      </g>
    </svg>
  );
}

const NAV = [
  {
    name: "Orbit",
    caret: true,
    art: (
      <>
        <ellipse cx="9" cy="9" rx="7.500" ry="3" />
        <path d="M9 1v16M7 4.500L9 1l2 3.500M7 13.500L9 17l2-3.500" />
      </>
    ),
  },
  { name: "Look at", art: <path d="M2 16h15M3 13h13V7H3zM4 7l1-3h3v2h2V4h4l2 3M3 9h13M3 11h13" /> },
  { name: "Pan", art: <path d="M6 16c-2-3-4-5-4-7 1-1 2 0 3 2V4c0-1 1.500-1 1.500 0v4-6c0-1 1.700-1 1.700 0v6-5.500c0-1 1.700-1 1.700 0V8l.6-4c.2-1 1.700-.7 1.500.5L11.500 9l2-2.500c.8-.8 2 0 1.500 1-1 3-1 5.500-4 8.500z" fill="#fff" /> },
  {
    name: "Zoom",
    art: (
      <>
        <circle cx="7" cy="7" r="5.500" fill="#fff" />
        <path d="M14 4h4M16 2v4M14 8h4" />
        <path d="M11 11l5.500 6" strokeWidth="2.600" />
      </>
    ),
  },
  {
    name: "Fit",
    caret: true,
    art: (
      <>
        <path d="M1 2h15v14H1z" strokeDasharray="2 2" stroke="#aaa" />
        <circle cx="8" cy="8" r="5.500" fill="#fff" />
        <path d="M12 12l5 5" strokeWidth="2.600" />
      </>
    ),
  },
  {
    name: "Display settings",
    caret: true,
    art: (
      <>
        <rect x="1" y="2" width="16" height="11" fill="#8db4e2" stroke="#5c7ea8" />
        <path d="M6 16h7M9 13v3" />
      </>
    ),
  },
  {
    name: "Grid settings",
    caret: true,
    art: <path d="M1.500 2.500h15v13h-15zM4.500 2v14M7.500 2v14M10.500 2v14M13.500 2v14M1 5.500h16M1 9h16M1 12.500h16" stroke="#666" />,
  },
  {
    name: "Viewports",
    caret: true,
    art: (
      <>
        <rect x="1" y="3" width="16" height="12" fill="#7fa8da" stroke="#44648f" />
        <path d="M9 3v12M1 9h16" stroke="#34507a" />
      </>
    ),
  },
];

function NavBar() {
  return (
    <div className="absolute bottom-[6px] left-1/2 flex h-[25px] -translate-x-1/2 items-center gap-[10px] bg-[#f5f5f5] px-1">
      {NAV.map((n) => (
        <button key={n.name} aria-label={n.name} className="flex items-center">
          <svg viewBox="0 0 18 18" className="h-[17px] w-[17px]" fill="none" stroke="#555" strokeWidth="1.100">
            {n.art}
          </svg>
          {n.caret && <Caret />}
        </button>
      ))}
    </div>
  );
}

/* ---------- timeline ---------- */

const T_ICONS = {
  s: (
    <>
      <path d="M1.500 1.500h14v9M1.500 1.500v14h9" stroke="#7f9cbd" strokeDasharray="2 1" />
      <path d="M5 5.500h7c0 4-3 6-7 6.500z" stroke="#888" />
      <path d="M10 16l6-6 1.500 1.500-6 6z" fill="#f0b848" />
      <path d="M15.500 10.500l1.500-1.500 1.500 1.500-1.500 1.500z" fill="#d8552f" />
    </>
  ),
  c: (
    <>
      <path d="M1.500 11c1-4 3-6 7-6h7v8l-4 4h-10z" fill="#dedede" stroke="#888" strokeWidth="1.200" />
      <Star x={13.5} y={5} r={4.500} />
    </>
  ),
  e: (
    <>
      <path d="M1 5l3-4h11l-3 4v12H1z" fill="#58a9e0" />
      <path d="M12 5l3-4v12l-3 4z" fill="#3883be" />
      <path d="M1 5l3-4h11l-3 4z" fill="#7fc0ee" />
      <path d="M16.500 14V2M15 4l1.500-3L18 4" stroke="#555" strokeWidth="0.800" />
    </>
  ),
  h: (
    <>
      <path d="M1.500 5l4-4H17v11l-4 5H1.500z" fill="#ddd" stroke="#888" />
      <path d="M4 7.500h8V15H4z" fill="#fff" />
      <path d="M4 7.500h4v4h4V15H4z" fill="#4391d0" />
    </>
  ),
  p: (
    <>
      <rect x="1.500" y="1" width="7" height="16" fill="#fafafa" stroke="#999" />
      <rect x="9" y="1" width="9" height="6.500" fill="#4a9cdb" />
    </>
  ),
  k: (
    <>
      <path d="M2 3l1.500-1.500H9v5L7.500 8H2zM10 12l1.500-1.500H17v5L15.500 17H10z" fill="#eee" stroke="#555" strokeWidth="1.100" />
      <path d="M2 11c0 3 2 4 4 4M5 13l2.500 2L5 17" stroke="#333" />
    </>
  ),
  j: (
    <>
      <path d="M2 7l4-5 3 2v5H7l-2 7-3-1z" fill="#d4d4d4" stroke="#999" />
      <path d="M10 8l2-1v2l4-6v13l-4-4-2-1z" fill="#cacaca" stroke="#999" />
    </>
  ),
  f: (
    <>
      <path d="M1.500 6l4-5H9c5 0 8 4 8 9v4l-3 3H1.500z" fill="#dedede" stroke="#999" />
      <path d="M6 3l3-2c5 0 8 4 8 9l-3 2c0-5-3-9-8-9z" fill="#4a9cdb" />
    </>
  ),
};

const STEPS = "scesecesehpsekkkcepsejjjjseffpsececejjj".split("");
const STEP_NAMES = {
  s: "Sketch",
  c: "Component",
  e: "Extrude",
  h: "Shell",
  p: "Position",
  k: "Copy",
  j: "Joint",
  f: "Fillet",
};

const PLAY = [
  ["To start", "M2 3h2v13H2zM14 3v13L5 9.500z"],
  ["Step back", "M11 3v12L2 9zM12.500 5.500h1.500v7h-1.500z"],
  ["Play", "M3 1.500l13 7.500L3 16.500z"],
  ["Step forward", "M7 3v12l9-6zM4 5.500h1.500v7H4z"],
  ["To end", "M14 3h2v13h-2zM4 3v13l9-6.500z"],
];

function Timeline() {
  return (
    <footer className="flex h-12 shrink-0 items-start border-t border-[#e2e2e2] bg-[#f1f1f1]">
      <div className="flex h-12 items-center gap-[9px] pl-[9px] pr-[18px] pt-px">
        {PLAY.map(([name, d]) => (
          <button key={name} aria-label={name}>
            <svg viewBox="0 0 18 18" className="h-[17px] w-[17px]" fill="#555">
              <path d={d} />
            </svg>
          </button>
        ))}
      </div>
      <ol className="mt-[15px] flex">
        {STEPS.map((s, k) => (
          <li key={k} className="flex w-[25px] flex-col items-start">
            <button aria-label={STEP_NAMES[s]} className="pl-[3px]">
              <svg viewBox="0 0 19 18" className="h-[18px] w-[19px]" fill="none">
                {T_ICONS[s]}
              </svg>
            </button>
            <span
              className={
                k === 0
                  ? "ml-[13px] mt-1 h-[6px] w-3 border-b-2 border-l border-[#bdbdbd]"
                  : k === STEPS.length - 1
                    ? "mt-1 h-[6px] w-[14px] border-b-2 border-r border-[#bdbdbd]"
                    : "mt-1 flex h-[6px] w-full justify-center border-b-2 border-[#bdbdbd]"
              }
            >
              {k > 0 && k < STEPS.length - 1 && <span className="h-1 w-px bg-[#a8a8a8]" />}
            </span>
          </li>
        ))}
      </ol>
      <svg viewBox="0 0 14 34" className="-ml-[6px] mt-[10px] h-[34px] w-[14px]">
        <path d="M1 0h12v4L8.200 9v25H5.800V9L1 4z" fill="#555" />
      </svg>
      <button aria-label="Timeline settings" className="ml-auto mr-[14px] mt-[17px]">
        <GearIcon className="h-4 w-4" />
      </button>
    </footer>
  );
}

export default function App() {
  return (
    <div className="flex h-screen flex-col overflow-hidden bg-white font-['Liberation_Sans',Arial,sans-serif]">
      <TitleBar />
      <DocBar />
      <Ribbon />
      <main className="relative min-h-0 flex-1 overflow-hidden">
        <Scene />
        <p className="pointer-events-none absolute left-1/2 top-[37%] -translate-x-1/2 whitespace-nowrap font-['Liberation_Serif','Noto_Sans_CJK_SC',serif] text-[64px] font-light leading-[80px] text-white opacity-80 [text-shadow:1px_1px_1px_#444,-1px_0_0_#ddd]">
          莫西网www.3dmox.com
        </p>
        <Browser />
        <section className="absolute bottom-[5px] left-1 flex h-[25px] w-[312px] items-center border border-[#d2d2d2] bg-[#f1f1f1] pl-[25px] pr-[11px] text-[11px] text-[#666]">
          <h2 className="flex-1">COMMENTS</h2>
          <button aria-label="Add comment">
            <svg viewBox="0 0 10 10" className="h-[10px] w-[10px]">
              <circle cx="5" cy="5" r="5" fill="#333" />
              <path d="M2 5h6M5 2v6" stroke="#fff" strokeWidth="1.300" />
            </svg>
          </button>
        </section>
        <ViewCube />
        <NavBar />
      </main>
      <Timeline />
      <div className="flex h-[9px] shrink-0 items-end overflow-hidden bg-[#1b1b1b]">
        <span className="ml-[33px] h-[3px] w-[14px] rounded-t-full bg-[#e58a98]" />
        <span className="ml-[374px] h-px w-[200px] bg-[#666]" />
        <span className="ml-[525px] h-1 w-10 bg-[#303030]" />
      </div>
    </div>
  );
}
